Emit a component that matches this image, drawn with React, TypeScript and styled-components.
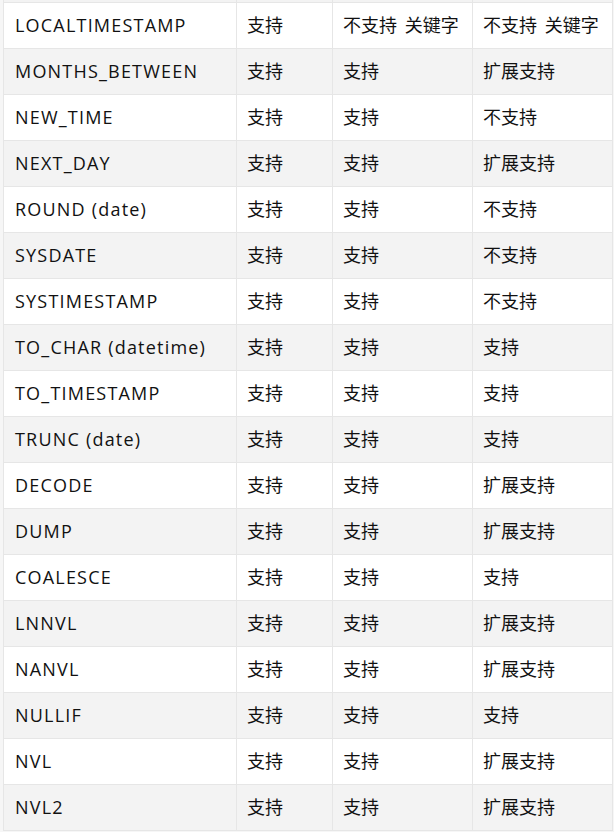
import React from 'react';
import styled, {createGlobalStyle} from "styled-components";

type Row = [string, string, string, string]

const rows: Row[] = [
    ['LOCALTIMESTAMP', '支持', '不支持 关键字', '不支持 关键字'],
    ['MONTHS_BETWEEN', '支持', '支持', '扩展支持'],
    ['NEW_TIME', '支持', '支持', '不支持'],
    ['NEXT_DAY', '支持', '支持', '扩展支持'],
    ['ROUND (date)', '支持', '支持', '不支持'],
    ['SYSDATE', '支持', '支持', '不支持'],
    ['SYSTIMESTAMP', '支持', '支持', '不支持'],
    ['TO_CHAR (datetime)', '支持', '支持', '支持'],
    ['TO_TIMESTAMP', '支持', '支持', '支持'],
    ['TRUNC (date)', '支持', '支持', '支持'],
    ['DECODE', '支持', '支持', '扩展支持'],
    ['DUMP', '支持', '支持', '扩展支持'],
    ['COALESCE', '支持', '支持', '支持'],
    ['LNNVL', '支持', '支持', '扩展支持'],
    ['NANVL', '支持', '支持', '扩展支持'],
    ['NULLIF', '支持', '支持', '支持'],
    ['NVL', '支持', '支持', '扩展支持'],
    ['NVL2', '支持', '支持', '扩展支持'],
]

const App = () => {
    return (
        <>
            <GlobalStyle/>
            <Page>
                <Table>
                    <colgroup>
                        <col style={{width: 233}}/>
                        <col style={{width: 96}}/>
                        <col style={{width: 140}}/>
                        <col style={{width: 140}}/>
                    </colgroup>
                    <tbody>
                    {/* tail of the row scrolled above the view */}
                    <Tr $striped>
                        <EdgeCell/><EdgeCell/><EdgeCell/><EdgeCell/>
                    </Tr>
                    {rows.map((r, i) => (
                        <Tr key={r[0]} $striped={i % 2 === 1}>
                            {r.map((c, j) => <Td key={j} $name={j === 0}>{c}</Td>)}
                        </Tr>
                    ))}
                    </tbody>
                </Table>
            </Page>
        </>
    );
};

export default App;

const GlobalStyle = createGlobalStyle`
    body {
        margin: 0;
        background: #ffffff;
    }
`

const Page = styled.div`
    width: 614px;
    height: 832px;
    overflow: hidden;
    background: #f6f6f6;
    padding-left: 3px;
    box-sizing: border-box;
`

const Table = styled.table`
    border-collapse: collapse;
    table-layout: fixed;
    width: 609px;
    font-family: "Open Sans", "Noto Sans CJK SC", sans-serif;
    font-size: 18px;
    color: #111111;
`

const Tr = styled.tr<{ $striped?: boolean }>`
    background: ${p => p.$striped ? '#f3f3f3' : '#ffffff'};
`

const Td = styled.td<{ $name?: boolean }>`
    height: 42px;
    padding: 1px 11px 2px ${p => p.$name ? '11px' : '10px'};
    border: 1px solid #e6e6e6;
    border-top: none;
    letter-spacing: ${p => p.$name ? '1.2px' : '0'};
    word-spacing: ${p => p.$name ? '0' : '3px'};
    line-height: 24px;
    vertical-align: middle;
    white-space: nowrap;
    overflow: hidden;
`

const EdgeCell = styled.td`
    height: 2px;
    padding: 0;
    border: 1px solid #e6e6e6;
    border-top: none;
`
